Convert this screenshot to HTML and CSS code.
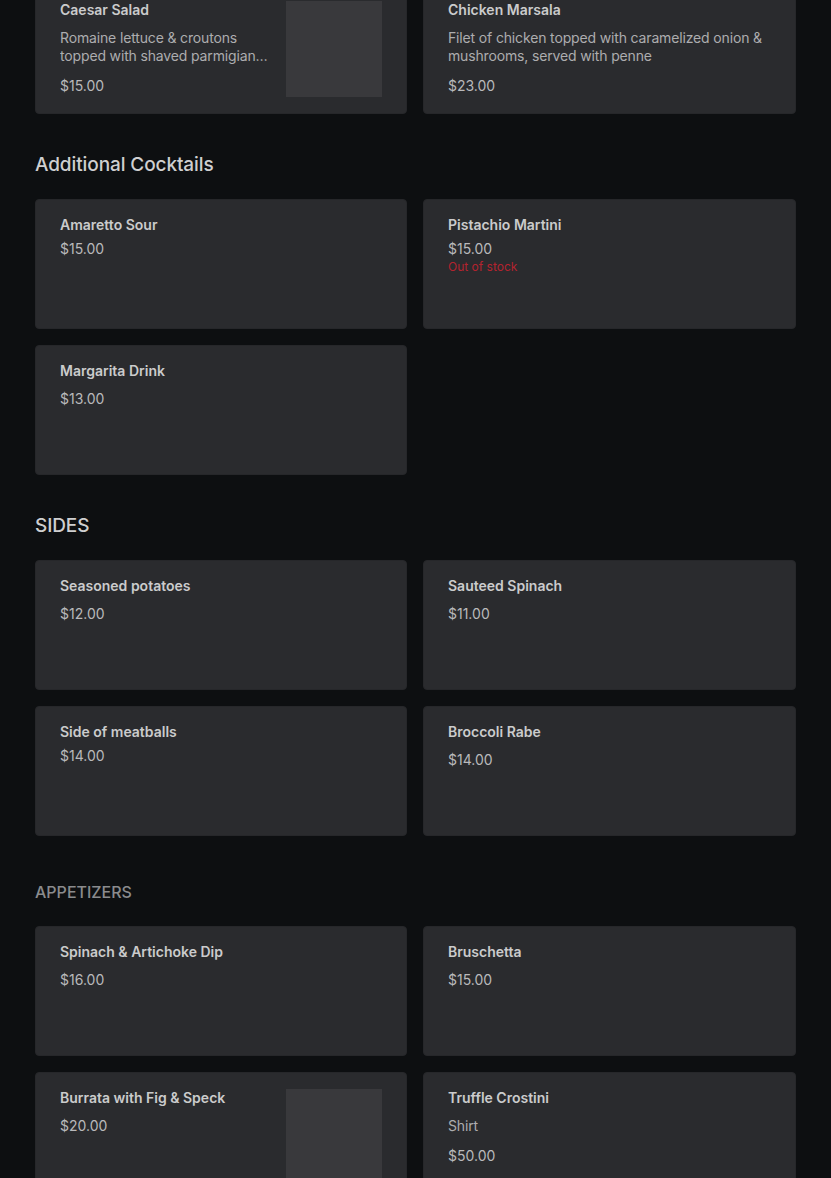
FILE: index.html
```html
<!DOCTYPE html>
<html lang="en">
    <head>
        <meta charset="UTF-8">
        <meta name="viewport" content="width=device-width, initial-scale=1.0">
        <title>Menu</title>
        <link rel="stylesheet" href="styles.css">
    </head>
    <body>
        <div class="menu">
            <section class="menu-section first">
                <div class="item-grid">
                    <div class="item-card">
                        <div class="item-info">
                            <div class="item-name">Caesar Salad</div>
                            <div class="item-desc">Romaine lettuce &amp; croutons topped with shaved parmigiano reggiano and house dressing</div>
                            <div class="item-price">$15.00</div>
                        </div>
                        <div class="item-image"></div>
                    </div>
                    <div class="item-card">
                        <div class="item-info">
                            <div class="item-name">Chicken Marsala</div>
                            <div class="item-desc">Filet of chicken topped with caramelized onion &amp; mushrooms, served with penne</div>
                            <div class="item-price">$23.00</div>
                        </div>
                    </div>
                </div>
            </section>

            <section class="menu-section">
                <h2 class="section-title">Additional Cocktails</h2>
                <div class="item-grid">
                    <div class="item-card">
                        <div class="item-info">
                            <div class="item-name">Amaretto Sour</div>
                            <div class="item-price tight">$15.00</div>
                        </div>
                    </div>
                    <div class="item-card">
                        <div class="item-info">
                            <div class="item-name">Pistachio Martini</div>
                            <div class="item-price tight">$15.00</div>
                            <div class="stock-note">Out of stock</div>
                        </div>
                    </div>
                    <div class="item-card">
                        <div class="item-info">
                            <div class="item-name">Margarita Drink</div>
                            <div class="item-price">$13.00</div>
                        </div>
                    </div>
                </div>
            </section>

            <section class="menu-section">
                <h2 class="section-title">SIDES</h2>
                <div class="item-grid">
                    <div class="item-card">
                        <div class="item-info">
                            <div class="item-name">Seasoned potatoes</div>
                            <div class="item-price">$12.00</div>
                        </div>
                    </div>
                    <div class="item-card">
                        <div class="item-info">
                            <div class="item-name">Sauteed Spinach</div>
                            <div class="item-price">$11.00</div>
                        </div>
                    </div>
                    <div class="item-card">
                        <div class="item-info">
                            <div class="item-name">Side of meatballs</div>
                            <div class="item-price tight">$14.00</div>
                        </div>
                    </div>
                    <div class="item-card">
                        <div class="item-info">
                            <div class="item-name">Broccoli Rabe</div>
                            <div class="item-price">$14.00</div>
                        </div>
                    </div>
                </div>
            </section>

            <section class="menu-section muted">
                <h2 class="section-title">APPETIZERS</h2>
                <div class="item-grid">
                    <div class="item-card">
                        <div class="item-info">
                            <div class="item-name">Spinach &amp; Artichoke Dip</div>
                            <div class="item-price">$16.00</div>
                        </div>
                    </div>
                    <div class="item-card">
                        <div class="item-info">
                            <div class="item-name">Bruschetta</div>
                            <div class="item-price">$15.00</div>
                        </div>
                    </div>
                    <div class="item-card">
                        <div class="item-info">
                            <div class="item-name">Burrata with Fig &amp; Speck</div>
                            <div class="item-price">$20.00</div>
                        </div>
                        <div class="item-image"></div>
                    </div>
                    <div class="item-card">
                        <div class="item-info">
                            <div class="item-name">Truffle Crostini</div>
                            <div class="item-desc">Shirt</div>
                            <div class="item-price">$50.00</div>
                        </div>
                    </div>
                </div>
            </section>
        </div>
    </body>
</html>
```

FILE: styles.css
```css
/* Global styles */
* {
    margin: 0;
    padding: 0;
    box-sizing: border-box;
    font-family: Inter, "Noto Sans", sans-serif;
}

body {
    background-color: #0d0f11;
    color: #c9c9ca;
    overflow: hidden;
}

.menu {
    padding: 0 35px;
    margin-top: -16px;
}

.menu-section {
    margin-top: 37px;
}

.menu-section.first {
    margin-top: 0;
}

.section-title {
    font-size: 19px;
    font-weight: 500;
    line-height: 28px;
    color: #cfcfd0;
    margin-bottom: 20px;
    letter-spacing: -0.1px;
}

.menu-section.muted {
    margin-top: 44px;
}

.menu-section.muted .section-title {
    font-size: 16px;
    line-height: 24px;
    color: #8a8b8d;
    margin-bottom: 22px;
    letter-spacing: 0;
}

.item-grid {
    display: grid;
    grid-template-columns: 372px 373px;
    gap: 16px;
}

.item-card {
    display: flex;
    gap: 16px;
    min-height: 130px;
    background: #2a2b2e;
    border: 1px solid #26272a;
    border-radius: 4px;
    padding: 16px 24px;
}

.item-info {
    flex: 1;
    min-width: 0;
}

.item-name {
    font-size: 14px;
    font-weight: 600;
    line-height: 18px;
    color: #cbcbcc;
}

.item-desc {
    font-size: 14px;
    line-height: 18px;
    letter-spacing: -0.15px;
    color: #adadaf;
    margin-top: 10px;
    display: -webkit-box;
    -webkit-line-clamp: 2;
    -webkit-box-orient: vertical;
    overflow: hidden;
}

.item-desc + .item-price {
    margin-top: 11px;
}

.item-price {
    font-size: 14px;
    line-height: 20px;
    color: #b9b9bb;
    margin-top: 9px;
}

.item-price.tight {
    margin-top: 5px;
}

.stock-note {
    font-size: 12px;
    line-height: 16px;
    color: #b3232e;
}

.item-image {
    flex: none;
    width: 96px;
    height: 96px;
    background: #39393c;
}
```
